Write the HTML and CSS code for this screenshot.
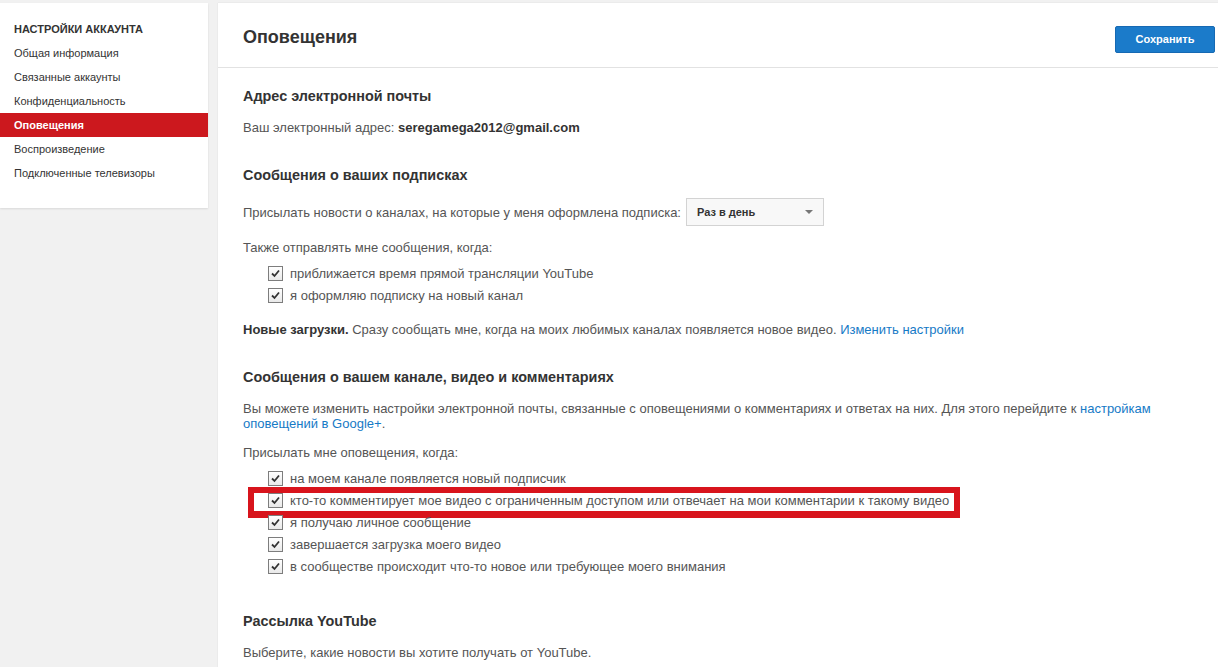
FILE: index.html
```html
<!DOCTYPE html>
<html lang="ru">
<head>
<meta charset="utf-8">
<title>Оповещения</title>
<link rel="stylesheet" href="styles.css">
</head>
<body>
<div class="page">
  <aside class="sidebar">
    <div class="side-title">НАСТРОЙКИ АККАУНТА</div>
    <a class="side-item">Общая информация</a>
    <a class="side-item">Связанные аккаунты</a>
    <a class="side-item">Конфиденциальность</a>
    <a class="side-item active">Оповещения</a>
    <a class="side-item">Воспроизведение</a>
    <a class="side-item">Подключенные телевизоры</a>
  </aside>
  <main class="main">
    <header class="main-header">
      <h1 class="main-title">Оповещения</h1>
      <button class="save-btn">Сохранить</button>
    </header>
    <div class="content">
      <h2 class="sec-title first">Адрес электронной почты</h2>
      <p class="line email-line">Ваш электронный адрес: <b class="email">seregamega2012@gmail.com</b></p>

      <h2 class="sec-title">Сообщения о ваших подписках</h2>
      <div class="select-row">
        <span class="line">Присылать новости о каналах, на которые у меня оформлена подписка:</span>
        <div class="select"><span>Раз в день</span><span class="arrow"></span></div>
      </div>
      <p class="line after-select">Также отправлять мне сообщения, когда:</p>
      <ul class="checks first-checks">
        <li class="check-row"><span class="cb"><svg viewBox="0 0 15 15" width="15" height="15"><path d="M4 7.5 L6.5 10 L11 4.5" fill="none" stroke="#333" stroke-width="1.8"/></svg></span>приближается время прямой трансляции YouTube</li>
        <li class="check-row"><span class="cb"><svg viewBox="0 0 15 15" width="15" height="15"><path d="M4 7.5 L6.5 10 L11 4.5" fill="none" stroke="#333" stroke-width="1.8"/></svg></span>я оформляю подписку на новый канал</li>
      </ul>
      <p class="line uploads"><b class="strong">Новые загрузки.</b> Сразу сообщать мне, когда на моих любимых каналах появляется новое видео. <a class="link">Изменить настройки</a></p>

      <h2 class="sec-title">Сообщения о вашем канале, видео и комментариях</h2>
      <p class="line para">Вы можете изменить настройки электронной почты, связанные с оповещениями о комментариях и ответах на них. Для этого перейдите к <a class="link">настройкам оповещений в Google+</a>.</p>
      <p class="line after-para">Присылать мне оповещения, когда:</p>
      <ul class="checks second-checks">
        <li class="check-row"><span class="cb"><svg viewBox="0 0 15 15" width="15" height="15"><path d="M4 7.5 L6.5 10 L11 4.5" fill="none" stroke="#333" stroke-width="1.8"/></svg></span>на моем канале появляется новый подписчик</li>
        <li class="check-row marked"><span class="cb"><svg viewBox="0 0 15 15" width="15" height="15"><path d="M4 7.5 L6.5 10 L11 4.5" fill="none" stroke="#333" stroke-width="1.8"/></svg></span>кто-то комментирует мое видео с ограниченным доступом или отвечает на мои комментарии к такому видео<span class="highlight"></span></li>
        <li class="check-row"><span class="cb"><svg viewBox="0 0 15 15" width="15" height="15"><path d="M4 7.5 L6.5 10 L11 4.5" fill="none" stroke="#333" stroke-width="1.8"/></svg></span>я получаю личное сообщение</li>
        <li class="check-row"><span class="cb"><svg viewBox="0 0 15 15" width="15" height="15"><path d="M4 7.5 L6.5 10 L11 4.5" fill="none" stroke="#333" stroke-width="1.8"/></svg></span>завершается загрузка моего видео</li>
        <li class="check-row"><span class="cb"><svg viewBox="0 0 15 15" width="15" height="15"><path d="M4 7.5 L6.5 10 L11 4.5" fill="none" stroke="#333" stroke-width="1.8"/></svg></span>в сообществе происходит что-то новое или требующее моего внимания</li>
      </ul>

      <h2 class="sec-title last-title">Рассылка YouTube</h2>
      <p class="line last-line">Выберите, какие новости вы хотите получать от YouTube.</p>
    </div>
  </main>
</div>
</body>
</html>
```

FILE: styles.css
```css
html, body {
  margin: 0;
  padding: 0;
  height: 100%;
  overflow: hidden;
}
body {
  background: #f1f1f1;
  font-family: "Liberation Sans", Arial, sans-serif;
  color: #555;
}
.page {
  display: flex;
  align-items: flex-start;
  padding-top: 3px;
  height: 100%;
  box-sizing: border-box;
}
.sidebar {
  width: 208px;
  flex: 0 0 208px;
  background: #fff;
  padding: 14px 0 23px;
  box-shadow: 0 1px 2px rgba(0,0,0,0.1);
  display: flex;
  flex-direction: column;
}
.side-title {
  font-size: 11px;
  font-weight: bold;
  color: #333;
  line-height: 24px;
  padding-left: 14px;
}
.side-item {
  display: block;
  font-size: 11px;
  line-height: 24px;
  color: #333;
  padding-left: 14px;
}
.side-item.active {
  background: #cc181e;
  color: #fff;
  font-weight: bold;
}
.main {
  flex: 1;
  margin-left: 10px;
  background: #fff;
  height: 100%;
  box-shadow: 0 0 1px rgba(0,0,0,0.15);
}
.main-header {
  display: flex;
  align-items: center;
  justify-content: space-between;
  height: 64px;
  border-bottom: 1px solid #e2e2e2;
  padding-left: 25px;
  padding-right: 3px;
}
.main-title {
  margin: 0;
  font-size: 18px;
  font-weight: bold;
  color: #333;
  margin-top: 5px;
}
.save-btn {
  width: 100px;
  height: 27px;
  border: 1px solid #1669b3;
  background: #1b7bca;
  color: #fff;
  font-family: "Liberation Sans", Arial, sans-serif;
  font-size: 11px;
  font-weight: bold;
  border-radius: 2px;
  margin-top: 8px;
  padding: 0;
}
.content {
  padding: 19px 60px 0 25px;
}
.sec-title {
  margin: 31px 0 0;
  font-size: 14.4px;
  font-weight: bold;
  color: #333;
  line-height: 18px;
}
.sec-title.first {
  margin-top: 0;
}
.sec-title.last-title {
  margin-top: 35px;
}
.line {
  font-size: 13px;
  line-height: 15px;
  margin: 16px 0 0;
}
.email-line {
  margin-top: 15px;
}
.email {
  color: #333;
}
.strong {
  color: #333;
}
.select-row {
  display: flex;
  align-items: center;
  gap: 5px;
  margin-top: 14px;
}
.select-row .line {
  margin: 0;
}
.select {
  height: 26px;
  border: 1px solid #d3d3d3;
  background: #f8f8f8;
  display: flex;
  align-items: center;
  justify-content: space-between;
  padding: 0 10px;
  box-sizing: content-box;
  width: 116px;
  font-size: 11px;
  font-weight: bold;
  color: #333;
}
.arrow {
  width: 0;
  height: 0;
  border-left: 4px solid transparent;
  border-right: 4px solid transparent;
  border-top: 4px solid #777;
}
.after-select {
  margin-top: 14px;
}
.checks {
  list-style: none;
  margin: 7px 0 0;
  padding: 0 0 0 25px;
}
.second-checks {
  margin-top: 7px;
}
.check-row {
  position: relative;
  display: flex;
  align-items: center;
  height: 22px;
  font-size: 13px;
  gap: 7px;
}
.cb {
  width: 15px;
  height: 15px;
  box-sizing: border-box;
  border: 1px solid #7d7d7d;
  background: linear-gradient(#ffffff, #e9e9e9);
  display: flex;
  align-items: center;
  justify-content: center;
}
.cb svg {
  display: block;
  flex: 0 0 auto;
}
.highlight {
  position: absolute;
  left: -20px;
  top: -2px;
  width: 700px;
  height: 18px;
  border: 6px solid #d8141c;
  border-bottom-width: 7px;
  pointer-events: none;
}
.uploads {
  margin-top: 16px;
}
.link {
  color: #167ac6;
  text-decoration: none;
}
.para {
  margin-top: 15px;
}
.after-para {
  margin-top: 14px;
}
.last-line {
  margin-top: 15px;
}
```
